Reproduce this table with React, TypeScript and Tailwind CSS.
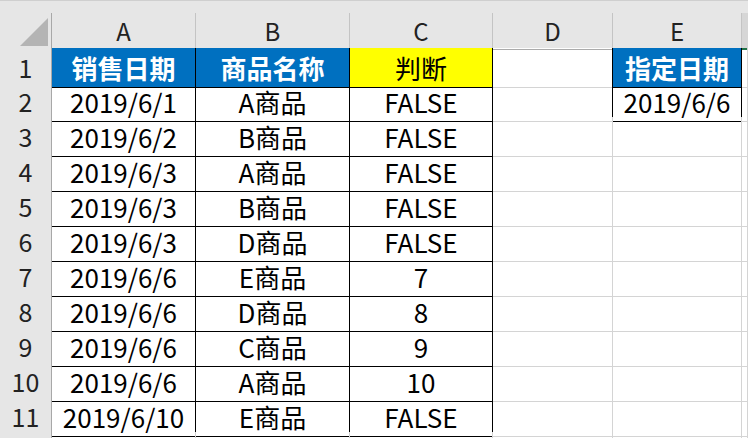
const font = '[font-family:"Noto_Sans_CJK_SC","Liberation_Sans",sans-serif]'

const rows: [string, string, string][] = [
  ['2019/6/1', 'A商品', 'FALSE'],
  ['2019/6/2', 'B商品', 'FALSE'],
  ['2019/6/3', 'A商品', 'FALSE'],
  ['2019/6/3', 'B商品', 'FALSE'],
  ['2019/6/3', 'D商品', 'FALSE'],
  ['2019/6/6', 'E商品', '7'],
  ['2019/6/6', 'D商品', '8'],
  ['2019/6/6', 'C商品', '9'],
  ['2019/6/6', 'A商品', '10'],
  ['2019/6/10', 'E商品', 'FALSE'],
]

const cols = 'grid grid-cols-[52px_144px_154px_143px_120px_129px_1fr]'
const grid = 'border-r border-b border-[#d4d4d4]'
const black = 'border-r border-b border-black'
const rowHead =
  'flex items-center justify-center bg-[#e6e6e6] border-r border-b border-r-[#a8a8a8] border-b-[#cfcfcf] text-[25px] text-[#222]'

export default function App() {
  return (
    <div className={`w-[748px] h-[438px] overflow-hidden bg-white text-black ${font}`}>
      {/* column headers */}
      <div className="bg-[#e6e6e6] border-t border-[#cfcfcf] h-[13px]" />
      <div className={`${cols} h-[35px] bg-[#e6e6e6] text-[24px] text-[#222]`}>
        <div className="border-r border-b border-r-[#a8a8a8] border-b-[#ababab] flex items-end justify-end pr-[2px] pb-[2px]">
          <svg width="29" height="29" viewBox="0 0 29 29">
            <polygon points="28,0 28,28 0,28" fill="#b4b4b4" />
          </svg>
        </div>
        {['A', 'B', 'C', 'D', 'E'].map((c) => (
          <div key={c} className="flex items-center justify-center border-r border-b border-r-[#c4c4c4] border-b-[#ababab]">
            {c}
          </div>
        ))}
        <div className="bg-[#d6d6d6] border-b-2 border-[#217346]" />
      </div>

      {/* row 1 */}
      <div className={`${cols} h-[34px] text-[26px]`}>
        <div className={rowHead}>1</div>
        <div className={`${black} bg-[#0070c0] text-white font-bold flex items-center justify-center`}>销售日期</div>
        <div className={`${black} bg-[#0070c0] text-white font-bold flex items-center justify-center`}>商品名称</div>
        <div className={`${black} bg-[#ffff00] flex items-center justify-center`}>判断</div>
        <div className="border-r border-b border-r-black border-b-[#d4d4d4]" />
        <div className={`${black} bg-[#0070c0] text-white font-bold flex items-center justify-center`}>指定日期</div>
        <div className={grid} />
      </div>

      {rows.map((r, i) => (
        <div key={i} className={`${cols} h-[35px] text-[26px]`}>
          <div className={rowHead}>{i + 2}</div>
          <div className={`${black} flex items-center justify-center`}>{r[0]}</div>
          <div className={`${black} flex items-center justify-center`}>{r[1]}</div>
          <div className={`${black} flex items-center justify-center`}>{r[2]}</div>
          {i === 0 ? (
            <>
              <div className="border-r border-b border-r-black border-b-[#d4d4d4]" />
              <div className={`${black} flex items-center justify-center`}>2019/6/6</div>
            </>
          ) : (
            <>
              <div className={grid} />
              <div className={grid} />
            </>
          )}
          <div className={grid} />
        </div>
      ))}

      {/* row 12, cut off at the window edge */}
      <div className={`${cols} h-[35px]`}>
        <div className={rowHead} />
        <div className={grid} />
        <div className={grid} />
        <div className={grid} />
        <div className={grid} />
        <div className={grid} />
        <div className={grid} />
      </div>
    </div>
  )
}
